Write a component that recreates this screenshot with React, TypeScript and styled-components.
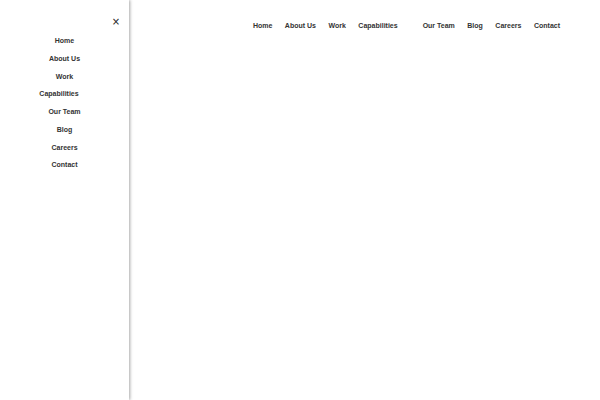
import styled, { createGlobalStyle } from "styled-components";

const Global = createGlobalStyle`
    html, body {
        margin: 0;
        padding: 0;
        background: #ffffff;
        font-family: "Liberation Sans", Arial, sans-serif;
    }
`;

const Page = styled.div`
    display: flex;
    width: 600px;
    height: 400px;
    overflow: hidden;
`;

const Sidebar = styled.aside`
    width: 129px;
    flex-shrink: 0;
    height: 400px;
    background: #ffffff;
    box-shadow: 1px 0 3px rgba(0, 0, 0, 0.35);
    display: flex;
    flex-direction: column;
    position: relative;
    z-index: 1;
`;

const CloseRow = styled.div`
    display: flex;
    justify-content: flex-end;
    padding: 15px 8px 0 0;
    height: 17px;
`;

const Close = styled.button`
    border: none;
    background: none;
    padding: 0;
    width: 10px;
    height: 14px;
    font-family: "DejaVu Sans", sans-serif;
    font-size: 10px;
    color: #222222;
    line-height: 14px;
    cursor: pointer;
`;

const SideList = styled.ul`
    list-style: none;
    margin: 0;
    padding: 0;
    display: flex;
    flex-direction: column;
`;

const SideItem = styled.li<{ $shift?: number }>`
    height: 17.75px;
    line-height: 17.75px;
    text-align: center;
    font-size: 7px;
    font-weight: bold;
    color: #333333;
    padding-right: ${p => p.$shift ?? 0}px;
`;

const Main = styled.main`
    flex: 1;
    display: flex;
    flex-direction: column;
`;

const TopNav = styled.nav`
    display: flex;
    justify-content: flex-end;
    gap: 12.5px;
    padding: 21px 40px 0 0;
`;

const NavLink = styled.a<{ $spacer?: boolean }>`
    font-size: 7px;
    font-weight: bold;
    color: #333333;
    text-decoration: none;
    line-height: 10px;
    width: ${p => (p.$spacer ? "0" : "auto")};
`;

const links = ["Home", "About Us", "Work", "Capabilities", "", "Our Team", "Blog", "Careers", "Contact"];

export default function App() {
    return (
        <>
            <Global />
            <Page>
                <Sidebar>
                    <CloseRow>
                        <Close>×</Close>
                    </CloseRow>
                    <SideList>
                        {links.filter(l => l).map(l => (
                            <SideItem key={l} $shift={l === "Capabilities" ? 11 : 0}>{l}</SideItem>
                        ))}
                    </SideList>
                </Sidebar>
                <Main>
                    <TopNav>
                        {links.map((l, i) => (
                            <NavLink key={i} href="#" $spacer={!l}>{l}</NavLink>
                        ))}
                    </TopNav>
                </Main>
            </Page>
        </>
    );
}
